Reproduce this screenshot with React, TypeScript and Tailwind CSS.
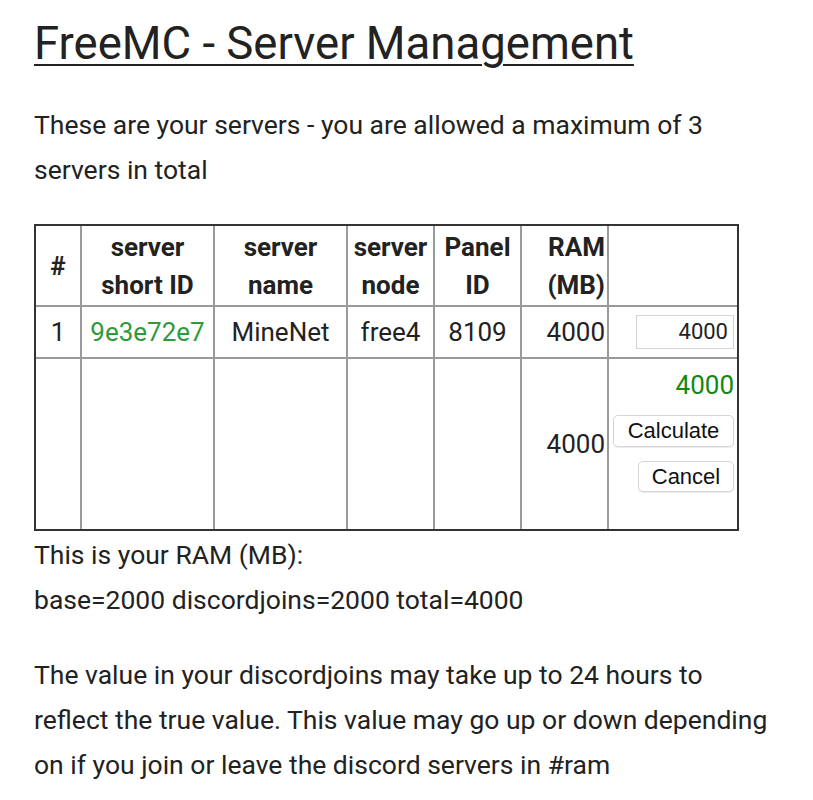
const cell = 'border-r-2 border-b-2 border-[#9a9a9a] px-[2px] align-middle last:border-r-0';
const lastRowCell = 'border-r-2 border-[#9a9a9a] px-[2px] align-middle last:border-r-0';

export default function App() {
  return (
    <div className="min-h-screen bg-white pl-[34px] pt-[17px] font-['Roboto',sans-serif] text-[#222]">
      <div className="w-[745px]">
        <h1 className="text-[45.5px] leading-[54px] underline decoration-[2px] underline-offset-[5px]">
          FreeMC - Server Management
        </h1>

        <p className="mt-[31px] text-[26.5px] leading-[45px]">
          These are your servers - you are allowed a maximum of 3 servers in total
        </p>

        <table className="mt-[32px] w-[703px] table-fixed border-separate border-spacing-0 border-2 border-[#333] text-[26px] leading-[38px]">
          <colgroup>
            <col className="w-[46px]" />
            <col className="w-[133px]" />
            <col className="w-[133px]" />
            <col className="w-[87px]" />
            <col className="w-[87px]" />
            <col className="w-[87px]" />
            <col className="w-[128px]" />
          </colgroup>
          <thead>
            <tr className="h-[81px] font-bold">
              <th className={`${cell} text-center`}>#</th>
              <th className={`${cell} text-center`}>server short ID</th>
              <th className={`${cell} text-center`}>server name</th>
              <th className={`${cell} text-center`}>server node</th>
              <th className={`${cell} text-center`}>Panel ID</th>
              <th className={`${cell} text-right`}>RAM (MB)</th>
              <th className={cell}></th>
            </tr>
          </thead>
          <tbody>
            <tr className="h-[52px]">
              <td className={`${cell} text-center`}>1</td>
              <td className={`${cell} text-center text-[#2e9a3c]`}>9e3e72e7</td>
              <td className={`${cell} text-center`}>MineNet</td>
              <td className={`${cell} text-center`}>free4</td>
              <td className={`${cell} text-center`}>8109</td>
              <td className={`${cell} text-right`}>4000</td>
              <td className={`${cell} pr-[3px]`}>
                <div className="flex justify-end">
                  <input
                    defaultValue="4000"
                    className="h-[34px] w-[98px] border border-[#d4d4d4] bg-white pr-[5px] text-right text-[22px] text-[#222] outline-none"
                  />
                </div>
              </td>
            </tr>
            <tr className="h-[170px]">
              <td className={lastRowCell}></td>
              <td className={lastRowCell}></td>
              <td className={lastRowCell}></td>
              <td className={lastRowCell}></td>
              <td className={lastRowCell}></td>
              <td className={`${lastRowCell} text-right`}>4000</td>
              <td className={`${lastRowCell} pr-[3px] pt-[7px] align-top`}>
                <div className="flex flex-col items-end">
                  <span className="text-[#118a11]">4000</span>
                  <button className="mt-[11px] h-[32px] w-[121px] rounded-[5px] border border-[#d6d6d6] bg-white font-['Liberation_Sans',Arial,sans-serif] text-[22px] leading-none text-[#111] shadow-[0_1px_1px_rgba(0,0,0,0.08)]">
                    Calculate
                  </button>
                  <button className="mt-[14px] h-[31px] w-[96px] rounded-[5px] border border-[#d6d6d6] bg-white font-['Liberation_Sans',Arial,sans-serif] text-[22px] leading-none text-[#111] shadow-[0_1px_1px_rgba(0,0,0,0.08)]">
                    Cancel
                  </button>
                </div>
              </td>
            </tr>
          </tbody>
        </table>

        <p className="mt-[1px] text-[26.5px] leading-[45px]">
          This is your RAM (MB):
          <br />
          base=2000 discordjoins=2000 total=4000
        </p>

        <p className="mt-[30px] text-[26.5px] leading-[45px]">
          The value in your discordjoins may take up to 24 hours to reflect the true value. This value may go up or down depending on if you join or leave the discord servers in #ram
        </p>
      </div>
    </div>
  );
}
